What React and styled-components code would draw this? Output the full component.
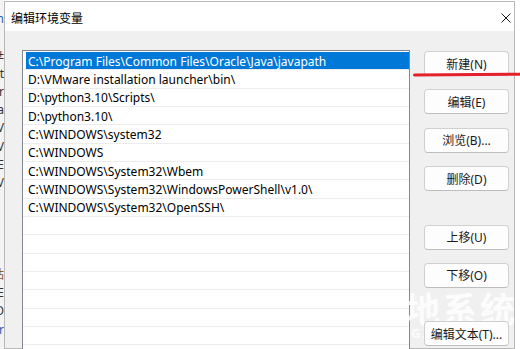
import React from 'react';
import styled, { createGlobalStyle } from 'styled-components';

const GlobalStyle = createGlobalStyle`
  html, body {
    margin: 0;
    padding: 0;
    width: 520px;
    height: 349px;
    overflow: hidden;
    background: #fff;
  }
  body {
    font-family: "Noto Sans", "Noto Sans CJK SC", sans-serif;
    font-size: 12px;
    color: #000;
  }
  * { box-sizing: border-box; }
`;

const Desktop = styled.div`
  position: relative;
  display: flex;
  width: 520px;
  height: 349px;
  overflow: hidden;
  background: #fff;
`;

/* sliver of the window behind the dialog */
const BackWindow = styled.div`
  width: 4px;
  flex: none;
  background: #f3f3f3;
  overflow: hidden;
  display: flex;
  flex-direction: column;
  padding-top: 9px;
`;

const BackGlyph = styled.div`
  height: 18.3px;
  display: flex;
  justify-content: flex-end;
  align-items: center;
  color: ${p => p.tone || '#333'};
  font-size: 12px;
  white-space: nowrap;
`;

const Dialog = styled.div`
  width: 511px;
  flex: none;
  margin-top: 1px;
  border: 1px solid #b8b8b8;
  background: #f0f0f0;
  display: flex;
  flex-direction: column;
`;

const TitleBar = styled.div`
  height: 29px;
  flex: none;
  background: #fff;
  display: flex;
  align-items: center;
  justify-content: space-between;
  padding: 1px 2px 0 6px;
  font-family: "Noto Sans CJK SC", sans-serif;
  font-size: 12px;
`;

const CloseBox = styled.div`
  width: 10px;
  height: 10px;
  display: flex;
  margin-top: 1px;
  margin-right: 1px;
`;

const Body = styled.div`
  flex: 1;
  display: flex;
  gap: 14px;
  padding: 19px 0 0 17px;
`;

const ListBox = styled.div`
  width: 388px;
  flex: none;
  height: 320px;
  border: 1px solid #828790;
  background: #fff;
  padding-top: 1px;
`;

const Row = styled.div`
  height: 18.33px;
  border-bottom: 1px solid #ececec;
  padding-left: 3px;
  display: flex;
`;

const Item = styled.div`
  flex: 1;
  display: flex;
  align-items: center;
  padding: 1px 0 0 2px;
  white-space: nowrap;
  background: ${p => (p.selected ? '#0078d7' : 'transparent')};
  color: ${p => (p.selected ? '#fff' : '#000')};
`;

const Buttons = styled.div`
  position: relative;
  z-index: 2;
  width: 85px;
  flex: none;
  display: flex;
  flex-direction: column;
  gap: 13.4px;
  padding-top: 1px;
`;

const Button = styled.div`
  height: 25px;
  margin-top: ${p => (p.separated ? '20px' : '0')};
  border: 1px solid #d0d0d0;
  border-bottom-color: #bdbdbd;
  border-radius: 4px;
  background: #fdfdfd;
  display: flex;
  align-items: center;
  justify-content: center;
  font-family: "Noto Sans", "Noto Sans CJK SC", sans-serif;
  font-size: 12px;
  color: #1a1a1a;
`;

const Underline = styled.div`
  position: absolute;
  z-index: 3;
  left: 413px;
  top: 73px;
  width: 112px;
  height: 3px;
  border-radius: 2px;
  background: #e3202b;
  transform: rotate(-0.4deg);
`;

const Watermark = styled.div`
  position: absolute;
  z-index: 1;
  left: 405px;
  top: 288px;
  font-family: "Noto Sans CJK SC", sans-serif;
  font-weight: 700;
  font-size: 35px;
  letter-spacing: 2.5px;
  color: rgba(255, 255, 255, 0.85);
  line-height: 40px;
  pointer-events: none;
`;

const WatermarkSub = styled.div`
  position: absolute;
  z-index: 1;
  left: 411px;
  top: 324px;
  font-family: "Noto Sans", sans-serif;
  font-weight: 700;
  font-size: 13px;
  letter-spacing: 2px;
  color: rgba(255, 255, 255, 0.85);
  pointer-events: none;
`;

const paths = [
  'C:\\Program Files\\Common Files\\Oracle\\Java\\javapath',
  'D:\\VMware installation launcher\\bin\\',
  'D:\\python3.10\\Scripts\\',
  'D:\\python3.10\\',
  'C:\\WINDOWS\\system32',
  'C:\\WINDOWS',
  'C:\\WINDOWS\\System32\\Wbem',
  'C:\\WINDOWS\\System32\\WindowsPowerShell\\v1.0\\',
  'C:\\WINDOWS\\System32\\OpenSSH\\',
  '', '', '', '', '', '', '', '',
];

const buttons = [
  { label: '新建(N)' },
  { label: '编辑(E)' },
  { label: '浏览(B)...' },
  { label: '删除(D)' },
  { label: '上移(U)', separated: true },
  { label: '下移(O)' },
  { label: '编辑文本(T)...', separated: true },
];

const backGlyphs = [
  { c: 'n', tone: '#1e5fb4' }, { c: '' }, { c: '±' }, { c: 't' }, { c: 'r' },
  { c: 'a' }, { c: 'V' }, { c: 'V' }, { c: 'E' }, { c: 'V' }, { c: '' },
  { c: '' }, { c: '' }, { c: '' }, { c: '站', tone: '#8a5a2a' }, { c: 'E' },
  { c: 'D' }, { c: 'r', tone: '#1e5fb4' },
];

function CloseIcon() {
  return (
    <svg width="10" height="10" viewBox="0 0 10 10">
      <path d="M0.5 0.5 L9.5 9.5 M9.5 0.5 L0.5 9.5" stroke="#1b1b1b" strokeWidth="1" fill="none" />
    </svg>
  );
}

export default function App() {
  return (
    <>
      <GlobalStyle />
      <Desktop>
        <BackWindow>
          {backGlyphs.map((g, i) => (
            <BackGlyph key={i} tone={g.tone}>{g.c}</BackGlyph>
          ))}
        </BackWindow>
        <Dialog>
          <TitleBar>
            <span>编辑环境变量</span>
            <CloseBox><CloseIcon /></CloseBox>
          </TitleBar>
          <Body>
            <ListBox>
              {paths.map((p, i) => (
                <Row key={i}>
                  <Item selected={i === 0}>{p}</Item>
                </Row>
              ))}
            </ListBox>
            <Buttons>
              {buttons.map(b => (
                <Button key={b.label} separated={b.separated}>{b.label}</Button>
              ))}
            </Buttons>
          </Body>
        </Dialog>
        <Underline />
        <Watermark>地系统</Watermark>
        <WatermarkSub>GXITONG</WatermarkSub>
      </Desktop>
    </>
  );
}
